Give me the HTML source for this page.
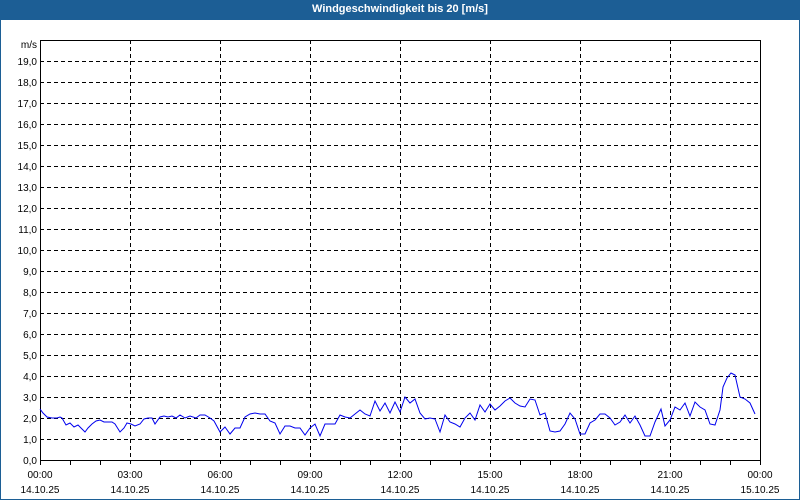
<!DOCTYPE html>
<html><head><meta charset="utf-8"><style>
html,body{margin:0;padding:0;background:#fff}
body{width:800px;height:500px;position:relative;overflow:hidden;font-family:"Liberation Sans","DejaVu Sans",sans-serif}
.frame{position:absolute;left:0;top:0;width:798px;height:498px;border:1px solid #1c5e95}
.hdr{position:absolute;left:0;top:0;width:800px;height:20px;background:#1c5e95;color:#fff;font-weight:bold;font-size:11px;text-align:center;line-height:19px}
</style></head><body>
<div class="frame"></div>
<div class="hdr">Windgeschwindigkeit bis 20 [m/s]</div>
<svg width="800" height="500" style="position:absolute;left:0;top:0" font-family="Liberation Sans, DejaVu Sans, sans-serif" font-size="10">
<g stroke="#000" stroke-width="1" stroke-dasharray="4,3" shape-rendering="crispEdges">
<line x1="40" x2="760" y1="61.5" y2="61.5"/><line x1="40" x2="760" y1="82.5" y2="82.5"/><line x1="40" x2="760" y1="103.5" y2="103.5"/><line x1="40" x2="760" y1="124.5" y2="124.5"/><line x1="40" x2="760" y1="145.5" y2="145.5"/><line x1="40" x2="760" y1="166.5" y2="166.5"/><line x1="40" x2="760" y1="187.5" y2="187.5"/><line x1="40" x2="760" y1="208.5" y2="208.5"/><line x1="40" x2="760" y1="229.5" y2="229.5"/><line x1="40" x2="760" y1="250.5" y2="250.5"/><line x1="40" x2="760" y1="271.5" y2="271.5"/><line x1="40" x2="760" y1="292.5" y2="292.5"/><line x1="40" x2="760" y1="313.5" y2="313.5"/><line x1="40" x2="760" y1="334.5" y2="334.5"/><line x1="40" x2="760" y1="355.5" y2="355.5"/><line x1="40" x2="760" y1="376.5" y2="376.5"/><line x1="40" x2="760" y1="397.5" y2="397.5"/><line x1="40" x2="760" y1="418.5" y2="418.5"/><line x1="40" x2="760" y1="439.5" y2="439.5"/>
<line x1="130.5" x2="130.5" y1="40" y2="465"/><line x1="220.5" x2="220.5" y1="40" y2="465"/><line x1="310.5" x2="310.5" y1="40" y2="465"/><line x1="400.5" x2="400.5" y1="40" y2="465"/><line x1="490.5" x2="490.5" y1="40" y2="465"/><line x1="580.5" x2="580.5" y1="40" y2="465"/><line x1="670.5" x2="670.5" y1="40" y2="465"/>
</g>
<g stroke="#000" shape-rendering="crispEdges">
<rect x="40.5" y="40.5" width="720" height="420" fill="none"/>
<path d="M40.5 460v5M70.5 460v5M100.5 460v5M160.5 460v5M190.5 460v5M250.5 460v5M280.5 460v5M340.5 460v5M370.5 460v5M430.5 460v5M460.5 460v5M520.5 460v5M550.5 460v5M610.5 460v5M640.5 460v5M700.5 460v5M730.5 460v5M760.5 460v5"/>
</g>
<polyline fill="none" stroke="#0000ee" stroke-width="1" points="40,409 43,413 47,417 52,418 57,418 60,417 62,418 66,425 70,423 74,427 78,425 81,428 85,432 88,428 92,424 96,421 100,420 104,422 108,422 112,422 115,424 120,432 124,428 127,423 131,424 135,426 140,424 144,419 148,418 152,418 155,424 160,417 164,416 168,417 172,416 176,418 180,415 185,418 190,416 196,418 200,415 205,415 210,418 214,421 220,432 225,427 230,434 235,428 240,428 245,417 250,414 255,413 260,414 265,414 270,421 275,423 280,434 285,426 290,426 295,428 300,428 305,435 310,428 315,424 320,436 325,424 330,424 335,424 340,415 345,417 350,418 355,414 360,410 365,414 370,416 375,401 380,411 385,403 390,413 395,402 400,412 405,397 410,403 415,399 420,413 425,419 430,418 435,419 440,432 445,415 450,422 455,424 460,427 465,418 470,413 475,420 480,405 485,412 490,404 495,410 500,406 505,401 510,398 515,403 520,406 525,407 530,399 535,400 540,415 545,413 550,431 555,432 560,431 565,424 570,413 575,419 580,434 585,434 590,423 595,420 600,414 605,414 610,418 615,425 620,422 625,415 630,423 635,416 640,425 645,436 650,436 655,422 661,409 665,426 670,420 675,407 680,410 685,403 690,416 695,402 700,407 705,410 710,424 715,425 720,410 723,387 727,378 731,373 735,375 740,397 745,399 750,403 755,414"/>
<g fill="#000" text-anchor="end">
<text x="37" y="48">m/s</text>
<text x="37" y="65">19,0</text><text x="37" y="86">18,0</text><text x="37" y="107">17,0</text><text x="37" y="128">16,0</text><text x="37" y="149">15,0</text><text x="37" y="170">14,0</text><text x="37" y="191">13,0</text><text x="37" y="212">12,0</text><text x="37" y="233">11,0</text><text x="37" y="254">10,0</text><text x="37" y="275">9,0</text><text x="37" y="296">8,0</text><text x="37" y="317">7,0</text><text x="37" y="338">6,0</text><text x="37" y="359">5,0</text><text x="37" y="380">4,0</text><text x="37" y="401">3,0</text><text x="37" y="422">2,0</text><text x="37" y="443">1,0</text><text x="37" y="464">0,0</text>
</g>
<g fill="#000" text-anchor="middle">
<text x="40" y="478">00:00</text><text x="40" y="493">14.10.25</text>
<text x="130" y="478">03:00</text><text x="130" y="493">14.10.25</text>
<text x="220" y="478">06:00</text><text x="220" y="493">14.10.25</text>
<text x="310" y="478">09:00</text><text x="310" y="493">14.10.25</text>
<text x="400" y="478">12:00</text><text x="400" y="493">14.10.25</text>
<text x="490" y="478">15:00</text><text x="490" y="493">14.10.25</text>
<text x="580" y="478">18:00</text><text x="580" y="493">14.10.25</text>
<text x="670" y="478">21:00</text><text x="670" y="493">14.10.25</text>
<text x="760" y="478">00:00</text><text x="760" y="493">15.10.25</text>
</g>
</svg>
</body></html>
